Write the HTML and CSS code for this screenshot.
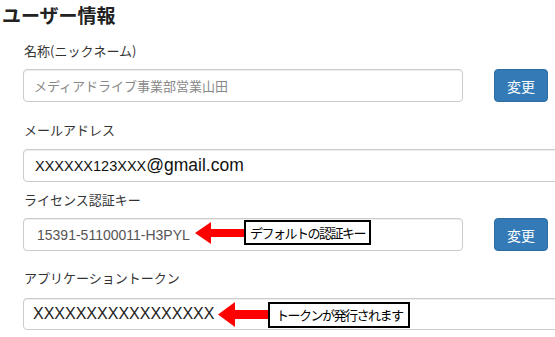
FILE: index.html
```html
<!DOCTYPE html>
<html>
	<head>
		<meta charset="UTF-8">
		<title>ユーザー情報</title>
		<link rel="stylesheet" href="styles.css">
	</head>
	<body>
		<h2 class="title">ユーザー情報</h2>

		<div class="group g1">
			<div class="label">名称(ニックネーム)</div>
			<div class="row">
				<div class="field short placeholder">メディアドライブ事業部営業山田</div>
				<div class="btn">変更</div>
			</div>
		</div>

		<div class="group g2">
			<div class="label">メールアドレス</div>
			<div class="row">
				<div class="field long mail"><span class="small">XXXXXX123XXX</span>@gmail.com</div>
			</div>
		</div>

		<div class="group g3">
			<div class="label">ライセンス認証キー</div>
			<div class="row">
				<div class="field short key">15391-51100011-H3PYL
					<div class="note note1">
						<svg class="arrow" width="49" height="24" viewBox="0 0 49 24"><polygon points="0,12 16,1 16,8 49,8 49,16 16,16 16,23" fill="#f00"/></svg>
						<span class="tag">デフォルトの認証キー</span>
					</div>
				</div>
				<div class="btn">変更</div>
			</div>
		</div>

		<div class="group g4">
			<div class="label">アプリケーショントークン</div>
			<div class="row">
				<div class="field long token">XXXXXXXXXXXXXXXXX
					<div class="note note2">
						<svg class="arrow" width="50" height="27" viewBox="0 0 50 27"><polygon points="0,13.5 17,1 17,9 50,9 50,18 17,18 17,26" fill="#f00"/></svg>
						<span class="tag">トークンが発行されます</span>
					</div>
				</div>
			</div>
		</div>
	</body>
</html>
```

FILE: styles.css
```css
*{
	margin: 0;
	padding: 0;
	box-sizing: border-box;
}
body{
	font-family: "Noto Sans CJK JP", "Liberation Sans", sans-serif;
	color: #333;
	background: #fff;
	overflow: hidden;
}
.title{
	font-size: 19px;
	font-weight: bold;
	line-height: 24px;
	padding: 3px 0 0 2px;
	height: 30px;
	color: #222;
}
.group{
	padding-left: 23px;
}
.label{
	font-size: 13px;
	line-height: 18px;
	margin-bottom: 9px;
	padding-left: 1px;
}
.g1{ margin-top: 12px; }
.g2{ margin-top: 19px; }
.g2 .label{ margin-bottom: 10px; }
.g3{ margin-top: 9px; }
.g4{ margin-top: 18px; }
.g4 .label{ margin-bottom: 11px; }

.row{
	display: flex;
	align-items: center;
	gap: 31px;
}
.field{
	position: relative;
	height: 33px;
	border: 1px solid #ccc;
	border-radius: 4px;
	box-shadow: inset 0 1px 1px rgba(0,0,0,.075);
	display: flex;
	align-items: center;
	padding-left: 11px;
	white-space: nowrap;
	flex-shrink: 0;
}
.short{ width: 440px; }
.long{ width: 560px; }
.placeholder{
	font-size: 13px;
	color: #888;
	padding-left: 10px;
}
.mail{
	font-family: "Liberation Sans", sans-serif;
	font-size: 17.5px;
	color: #111;
}
.mail .small{
	font-size: 14.5px;
}
.key{
	font-family: "Liberation Sans", sans-serif;
	font-size: 14px;
	color: #555;
	padding-left: 13px;
}
.token{
	font-family: "Liberation Sans", sans-serif;
	font-size: 16px;
	color: #222;
	height: 32px;
	padding-left: 9px;
}
.btn{
	width: 54px;
	height: 33px;
	background: #337ab7;
	border: 1px solid #2e6da4;
	border-radius: 4px;
	color: #fff;
	font-size: 14px;
	display: flex;
	align-items: center;
	justify-content: center;
	flex-shrink: 0;
}

/* 注釈（矢印と吹き出し） */
.note{
	position: absolute;
	display: flex;
	align-items: center;
}
.note1{
	left: 171px;
	top: 1px;
}
.note2{
	left: 194px;
	top: 2px;
}
.tag{
	font-family: "Noto Sans CJK JP", sans-serif;
	font-size: 13px;
	letter-spacing: -1.5px;
	color: #000;
	background: #fff;
	border: 2px solid #000;
	line-height: 21px;
	padding: 0 4px;
	white-space: nowrap;
}
.note1 .tag{
	width: 127px;
	height: 25px;
}
.note2 .tag{
	width: 142px;
	height: 26px;
	padding-left: 6px;
}
.arrow{
	display: block;
}
```
